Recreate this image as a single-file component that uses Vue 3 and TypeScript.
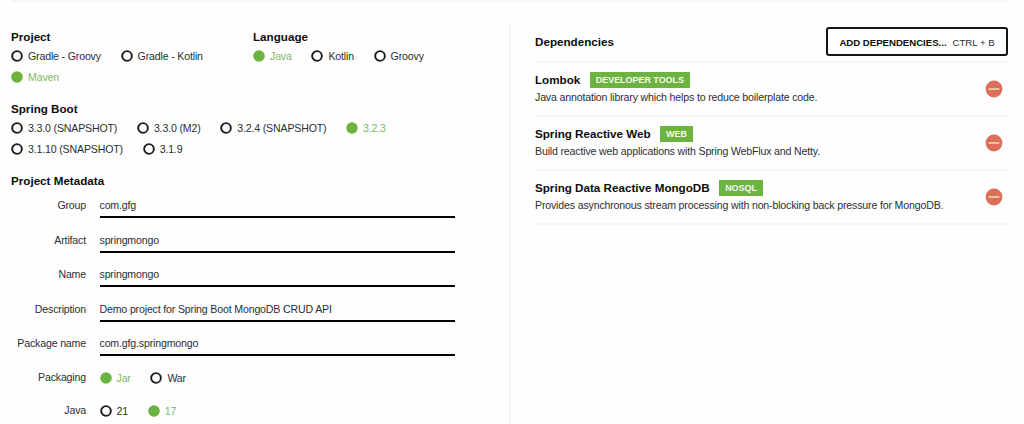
<script setup lang="ts">
interface Choice {
  label: string
  selected?: boolean
}
interface Field {
  label: string
  value: string
}
interface Dependency {
  name: string
  tag: string
  description: string
}

const projects: Choice[] = [
  { label: 'Gradle - Groovy' },
  { label: 'Gradle - Kotlin' },
  { label: 'Maven', selected: true },
]
const languages: Choice[] = [
  { label: 'Java', selected: true },
  { label: 'Kotlin' },
  { label: 'Groovy' },
]
const versions: Choice[] = [
  { label: '3.3.0 (SNAPSHOT)' },
  { label: '3.3.0 (M2)' },
  { label: '3.2.4 (SNAPSHOT)' },
  { label: '3.2.3', selected: true },
  { label: '3.1.10 (SNAPSHOT)' },
  { label: '3.1.9' },
]
const fields: Field[] = [
  { label: 'Group', value: 'com.gfg' },
  { label: 'Artifact', value: 'springmongo' },
  { label: 'Name', value: 'springmongo' },
  { label: 'Description', value: 'Demo project for Spring Boot MongoDB CRUD API' },
  { label: 'Package name', value: 'com.gfg.springmongo' },
]
const options: { label: string; choices: Choice[] }[] = [
  { label: 'Packaging', choices: [{ label: 'Jar', selected: true }, { label: 'War' }] },
  { label: 'Java', choices: [{ label: '21' }, { label: '17', selected: true }] },
]
const dependencies: Dependency[] = [
  {
    name: 'Lombok',
    tag: 'DEVELOPER TOOLS',
    description: 'Java annotation library which helps to reduce boilerplate code.',
  },
  {
    name: 'Spring Reactive Web',
    tag: 'WEB',
    description: 'Build reactive web applications with Spring WebFlux and Netty.',
  },
  {
    name: 'Spring Data Reactive MongoDB',
    tag: 'NOSQL',
    description:
      'Provides asynchronous stream processing with non-blocking back pressure for MongoDB.',
  },
]
</script>

<template>
  <div class="page">
    <div class="rule"></div>
    <main class="columns">
      <section class="left">
        <div class="top">
          <div class="group project">
            <h2>Project</h2>
            <div class="choices">
              <span v-for="c in projects" :key="c.label" class="choice" :class="{ on: c.selected }">
                <svg class="dot" viewBox="0 0 12 12"><circle cx="6" cy="6" r="4.85" /></svg>{{ c.label }}
              </span>
            </div>
          </div>
          <div class="group">
            <h2>Language</h2>
            <div class="choices">
              <span v-for="c in languages" :key="c.label" class="choice" :class="{ on: c.selected }">
                <svg class="dot" viewBox="0 0 12 12"><circle cx="6" cy="6" r="4.85" /></svg>{{ c.label }}
              </span>
            </div>
          </div>
        </div>
        <div class="group">
          <h2>Spring Boot</h2>
          <div class="choices">
            <span v-for="c in versions" :key="c.label" class="choice" :class="{ on: c.selected }">
              <svg class="dot" viewBox="0 0 12 12"><circle cx="6" cy="6" r="4.85" /></svg>{{ c.label }}
            </span>
          </div>
        </div>
        <div class="metadata">
          <h2>Project Metadata</h2>
          <div v-for="f in fields" :key="f.label" class="field">
            <span class="label">{{ f.label }}</span>
            <span class="input">{{ f.value }}</span>
          </div>
          <div v-for="o in options" :key="o.label" class="option">
            <span class="label">{{ o.label }}</span>
            <div class="choices">
              <span v-for="c in o.choices" :key="c.label" class="choice" :class="{ on: c.selected }">
                <svg class="dot" viewBox="0 0 12 12"><circle cx="6" cy="6" r="4.85" /></svg>{{ c.label }}
              </span>
            </div>
          </div>
        </div>
      </section>
      <section class="right">
        <header class="head">
          <h2>Dependencies</h2>
          <button class="add" type="button"><b>ADD DEPENDENCIES...</b><span>CTRL + B</span></button>
        </header>
        <article v-for="d in dependencies" :key="d.name" class="dep">
          <div class="info">
            <div class="title">
              <h3>{{ d.name }}</h3>
              <span class="tag">{{ d.tag }}</span>
            </div>
            <p>{{ d.description }}</p>
          </div>
          <svg class="remove" viewBox="0 0 18 18">
            <circle cx="9" cy="9" r="8.4" fill="#dc6f5a" />
            <path d="M3.6 9h10.8" stroke="#eccda4" stroke-width="1.8" />
          </svg>
        </article>
      </section>
    </main>
  </div>
</template>

<style>
body {
  margin: 0;
  background: #fefefe;
}
</style>

<style scoped>
.page {
  box-sizing: border-box;
  width: 1024px;
  height: 424px;
  overflow: hidden;
  padding: 0 16px 0 11px;
  background: #fefefe;
  font-family: 'Liberation Sans', Arial, sans-serif;
  font-size: 10.6px;
  letter-spacing: -0.165px;
  color: #2b2f33;
  white-space: nowrap;
}
.rule {
  height: 2px;
  background: #f3f7f8;
}
.columns {
  display: flex;
  padding-top: 20px;
}
.left {
  box-sizing: border-box;
  flex: none;
  width: 500px;
  height: 402px;
  padding-top: 7px;
  border-right: 2px solid #f3f7f8;
}
h2,
h3 {
  margin: 0;
  font-size: 11.65px;
  letter-spacing: 0;
  line-height: 16px;
  font-weight: 700;
  color: #0c0d0f;
}
.top {
  display: flex;
}
.project {
  width: 242px;
}
.group {
  height: 72px;
}
.choices {
  display: flex;
  flex-wrap: wrap;
  column-gap: 19.7px;
}
.choice {
  display: flex;
  align-items: center;
  height: 20.6px;
  line-height: 20px;
}
.group .choices {
  margin-top: 1px;
}
.choice.on {
  color: #82b864;
}
.dot {
  width: 12px;
  height: 12px;
  margin-right: 5px;
  fill: none;
  stroke: #191b1e;
  stroke-width: 1.9;
}
.on .dot {
  fill: #6db33f;
  stroke: #6db33f;
}
.metadata h2 {
  margin-bottom: 10px;
}
.field {
  display: flex;
  height: 34.55px;
}
.label {
  width: 75px;
  margin-right: 13.5px;
  line-height: 13px;
  text-align: right;
}
.input {
  box-sizing: border-box;
  width: 355.5px;
  height: 19px;
  line-height: 13px;
  border-bottom: 2px solid #000;
}
.option {
  display: flex;
  align-items: center;
  height: 20px;
  margin: -4px 0 17px;
}
.option + .option {
  margin-top: -4px;
}
.right {
  flex: 1;
  padding-left: 24px;
}
.head {
  display: flex;
  align-items: center;
  justify-content: space-between;
  height: 39px;
  border-bottom: 2px solid #f3f7f8;
}
.add {
  box-sizing: border-box;
  width: 182px;
  height: 29px;
  padding: 1px 0 0;
  border: 2px solid #121417;
  border-radius: 3px;
  background: #fff;
  font: 9.6px 'Liberation Sans', Arial, sans-serif;
  color: #2b2f33;
}
.add b {
  margin-right: 6px;
  color: #0c0d0f;
}
.dep {
  box-sizing: border-box;
  display: flex;
  align-items: center;
  justify-content: space-between;
  height: 54px;
  padding-right: 5.5px;
  border-bottom: 2px solid #f3f7f8;
}
.info {
  padding-bottom: 2px;
}
.title {
  display: flex;
  align-items: center;
  height: 16px;
}
.tag {
  margin-left: 9.3px;
  padding: 0 6.2px;
  height: 16px;
  line-height: 17px;
  background: #6db33f;
  color: #f4faf0;
  font-size: 8.95px;
  letter-spacing: 0;
  font-weight: 700;
}
.dep p {
  margin: 2px 0 0;
  line-height: 14px;
}
.remove {
  width: 18px;
  height: 18px;
}
</style>
